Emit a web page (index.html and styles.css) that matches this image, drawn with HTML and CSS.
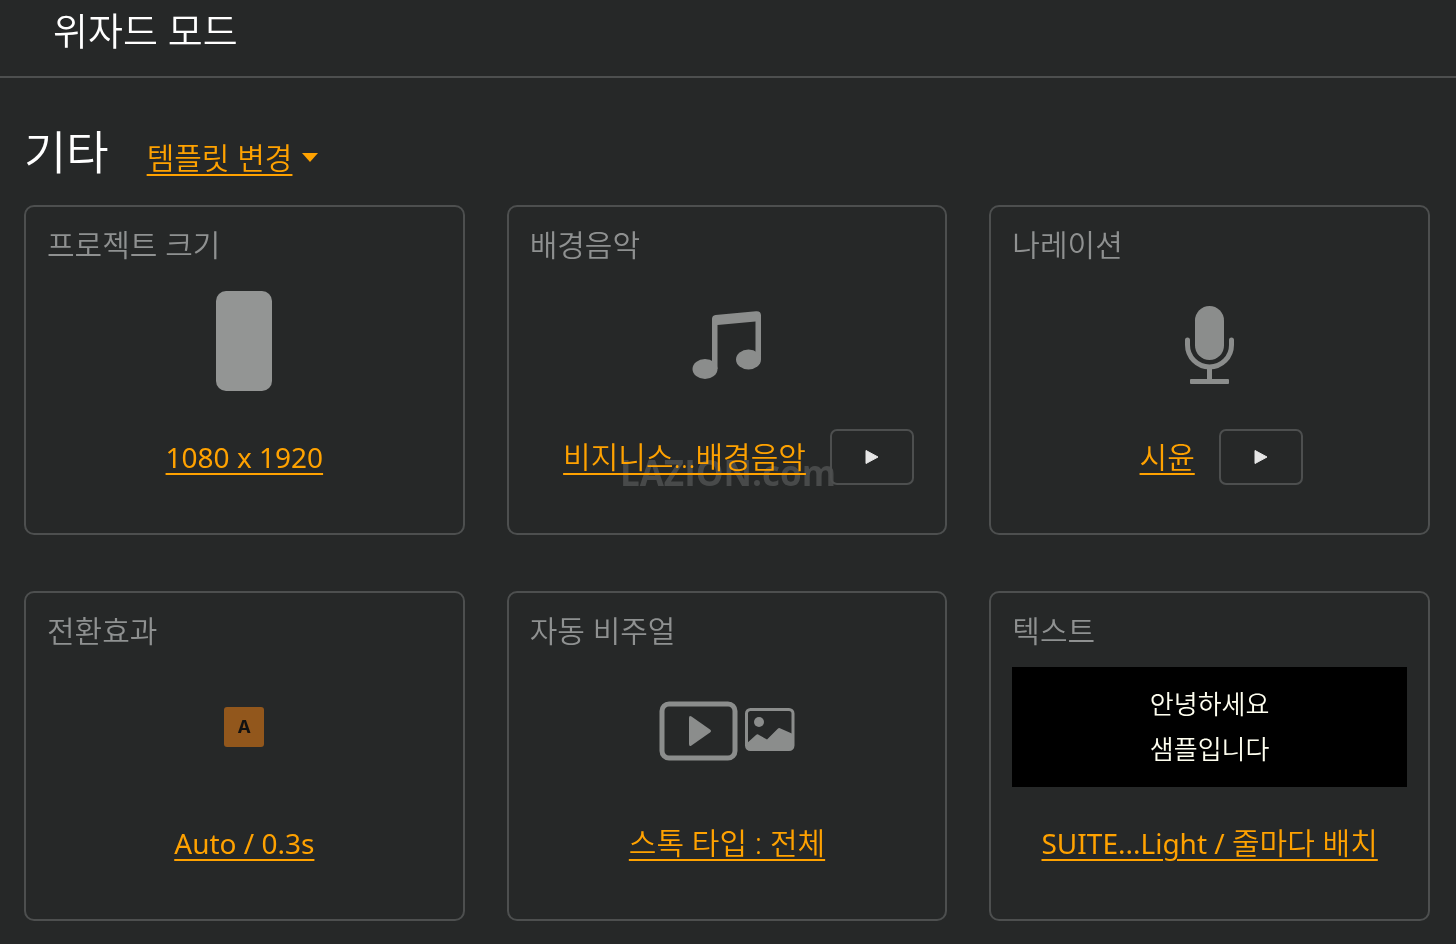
FILE: index.html
```html
<!DOCTYPE html>
<html lang="ko">
<head>
    <meta charset="UTF-8">
    <meta name="viewport" content="width=device-width, initial-scale=1.0">
    <title>위자드 모드</title>
    <link rel="stylesheet" href="styles.css">
</head>
<body>

<header class="header">
    <h1>위자드 모드</h1>
</header>

<main class="container">
    <div class="template-bar">
        <h2>기타</h2>
        <a href="#" class="link template-link">템플릿 변경</a>
        <svg class="caret" viewBox="0 0 16 16" aria-hidden="true"><path d="M0 0h16L8 9z"/></svg>
    </div>

    <div class="cards">
        <section class="card">
            <h3>프로젝트 크기</h3>
            <div class="preview"><div class="ratio-box"></div></div>
            <div class="value"><a href="#" class="link latin">1080 x 1920</a></div>
        </section>

        <section class="card">
            <h3>배경음악</h3>
            <div class="preview">
                <svg class="icon" viewBox="0 0 160 120" aria-hidden="true">
                    <path d="M65 38q0-3.500 3.500-4L109 30.200q5-.4 5 4.300V78.500h-5.500V40.500L70.500 44V88H65z"/>
                    <ellipse cx="58" cy="88" rx="12.500" ry="10"/>
                    <ellipse cx="101.500" cy="78.500" rx="12.500" ry="10"/>
                </svg>
            </div>
            <div class="value with-play">
                <a href="#" class="link">비지니스...배경음악</a>
                <button type="button" class="play-button" aria-label="배경음악 재생">
                    <svg viewBox="0 0 14 16" aria-hidden="true"><path d="M1 1.500v13L13 8z"/></svg>
                </button>
            </div>
        </section>

        <section class="card">
            <h3>나레이션</h3>
            <div class="preview">
                <svg class="icon" viewBox="0 0 160 120" aria-hidden="true">
                    <rect x="65" y="25" width="29" height="54" rx="14.500"/>
                    <path class="stroke" d="M57.500 59v5a22 22 0 0 0 44 0v-5M79.500 87v13"/>
                    <rect x="60" y="98" width="39" height="5" rx="1"/>
                </svg>
            </div>
            <div class="value with-play">
                <a href="#" class="link">시윤</a>
                <button type="button" class="play-button" aria-label="나레이션 재생">
                    <svg viewBox="0 0 14 16" aria-hidden="true"><path d="M1 1.500v13L13 8z"/></svg>
                </button>
            </div>
        </section>

        <section class="card">
            <h3>전환효과</h3>
            <div class="preview"><div class="transition-box">A</div></div>
            <div class="value"><a href="#" class="link latin">Auto / 0.3s</a></div>
        </section>

        <section class="card">
            <h3>자동 비주얼</h3>
            <div class="preview">
                <svg class="icon" viewBox="0 0 160 120" aria-hidden="true">
                    <rect class="stroke" x="15" y="37" width="73" height="54" rx="7"/>
                    <path d="M42 51q0-3 2.500-1.500L63 62.500q2 1.500 0 3L44.500 78.500Q42 80 42 77z"/>
                    <rect class="stroke thin" x="99.500" y="42.500" width="46.500" height="40" rx="4"/>
                    <circle cx="112" cy="55" r="5"/>
                    <path d="M99 77l10-9q1.500-1.500 3 0l8 4.500 10.500-10.500q1.500-1.500 3-.5L146 67v13q0 3-3 3h-41q-3 0-3-3z"/>
                </svg>
            </div>
            <div class="value"><a href="#" class="link">스톡 타입 : 전체</a></div>
        </section>

        <section class="card">
            <h3>텍스트</h3>
            <div class="preview text-preview">
                <p>안녕하세요<br>샘플입니다</p>
            </div>
            <div class="value"><a href="#" class="link"><span class="latin">SUITE...Light / </span>줄마다 배치</a></div>
        </section>
    </div>
</main>

<div class="watermark">LAZION.com</div>

</body>
</html>
```
FILE: styles.css
```css
* {
    box-sizing: border-box;
}
body {
    margin: 0;
    background-color: #262828;
    color: #ffffff;
    font-family: "Noto Sans", "Noto Sans CJK KR", sans-serif;
    font-weight: 350;
}
h1, h2, h3, p {
    margin: 0;
    font-weight: 350;
}
.header {
    padding: 2px 53px 18px;
    border-bottom: 2px solid #4d4f4f;
}
.header h1 {
    font-size: 38px;
    line-height: 56px;
}
.container {
    padding: 41px 26px 24px 24px;
}
.template-bar {
    display: flex;
    align-items: baseline;
    margin-bottom: 22px;
}
.template-bar h2 {
    font-size: 46px;
    line-height: 64px;
}
.template-link {
    margin-left: 38px;
    margin-right: 10px;
}
.caret {
    width: 16px;
    height: 16px;
    fill: #ffa200;
}
.link {
    color: #ffa200;
    font-size: 30px;
    line-height: 40px;
    text-decoration: underline;
    text-decoration-thickness: 2px;
    text-underline-offset: 5px;
    white-space: nowrap;
}
.latin {
    font-size: 28px;
    font-weight: 400;
}
.cards {
    display: grid;
    grid-template-columns: repeat(3, 1fr);
    gap: 56px 42px;
}
.card {
    padding: 18px 21px 48px;
    border: 2px solid #4d4f4f;
    border-radius: 10px;
}
.card h3 {
    color: #8f9191;
    font-size: 30px;
    line-height: 40px;
}
.preview {
    display: flex;
    align-items: center;
    justify-content: center;
    height: 120px;
    margin: 16px 0 28px;
}
.icon {
    width: 160px;
    height: 120px;
    fill: #8b8d8c;
}
.icon .stroke {
    fill: none;
    stroke: #8b8d8c;
    stroke-width: 5px;
    stroke-linecap: round;
}
.icon .thin {
    stroke-width: 3px;
}
.ratio-box {
    width: 56px;
    height: 100px;
    border-radius: 10px;
    background: #939594;
}
.transition-box {
    width: 40px;
    height: 40px;
    border-radius: 3px;
    background: #92571c;
    color: #111111;
    font-family: Inter, sans-serif;
    font-size: 18px;
    font-weight: 700;
    line-height: 40px;
    text-align: center;
}
.text-preview {
    background: #000000;
    color: #fffff0;
    font-size: 26px;
    line-height: 45px;
    text-align: center;
}
.value {
    display: flex;
    align-items: center;
    justify-content: center;
    height: 56px;
}
.with-play {
    gap: 24px;
    padding-left: 23px;
}
.play-button {
    display: flex;
    align-items: center;
    justify-content: center;
    width: 84px;
    height: 56px;
    padding: 0;
    border: 2px solid #4d4f4f;
    border-radius: 7px;
    background: transparent;
    cursor: pointer;
}
.play-button svg {
    width: 14px;
    height: 16px;
    fill: #e6e6e6;
    stroke: #e6e6e6;
    stroke-linejoin: round;
}
/* Site mark in the middle of the window */
.watermark {
    position: fixed;
    top: 50%;
    left: 50%;
    transform: translate(-50%, -50%);
    z-index: -1;
    color: #484a4a;
    font-family: "Open Sans", sans-serif;
    font-size: 35px;
    font-weight: 700;
    line-height: 1;
    pointer-events: none;
}
```
